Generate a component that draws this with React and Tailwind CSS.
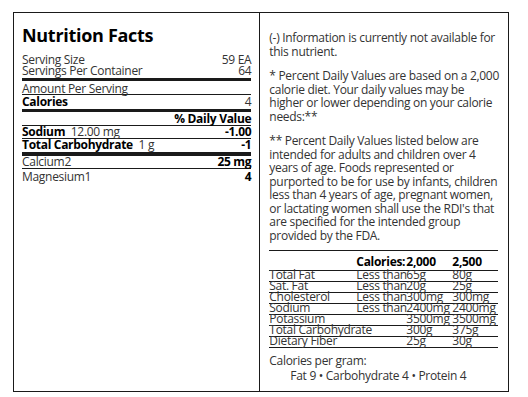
export default function App() {
  const rows = [
    ["Total Fat", "Less than", "65g", "80g"],
    ["Sat. Fat", "Less than", "20g", "25g"],
    ["Cholesterol", "Less than", "300mg", "300mg"],
    ["Sodium", "Less than", "2400mg", "2400mg"],
    ["Potassium", "", "3500mg", "3500mg"],
    ["Total Carbohydrate", "", "300g", "375g"],
    ["Dietary Fiber", "", "25g", "30g"],
  ];
  const p1 = ["(-) Information is currently not available for", "this nutrient."];
  const p2 = [
    "* Percent Daily Values are based on a 2,000",
    "calorie diet. Your daily values may be",
    "higher or lower depending on your calorie",
    "needs:**",
  ];
  const p3 = [
    "** Percent Daily Values listed below are",
    "intended for adults and children over 4",
    "years of age. Foods represented or",
    "purported to be for use by infants, children",
    "less than 4 years of age, pregnant women,",
    "or lactating women shall use the RDI's that",
    "are specified for the intended group",
    "provided by the FDA.",
  ];
  const Para = ({ lines, className }) => (
    <p className={className}>
      {lines.map((l) => (
        <span key={l} className="block whitespace-nowrap">{l}</span>
      ))}
    </p>
  );
  return (
    <div className="w-[528px] h-[397px] bg-white pt-[12px] pl-[13px] text-[#333] text-[12px]" style={{ fontFamily: '"Open Sans", "Noto Sans", sans-serif' }}>
      <div className="flex w-[496px] h-[380px] border border-[#1a1a1a]">
        <div className="w-[247px] border-r border-[#1a1a1a] px-[8px] pt-[11px]">
          <div className="text-[18px] font-bold text-black leading-[22px] tracking-[-0.3px]">Nutrition Facts</div>
          <div className="mt-[8px] leading-[11px] tracking-[-0.3px]">
            <div className="flex justify-between"><span>Serving Size</span><span>59 EA</span></div>
            <div className="flex justify-between border-b-[3px] border-[#1a1a1a] pb-[2px]"><span>Servings Per Container</span><span>64</span></div>
            <div className="border-b border-[#1a1a1a] pt-[2px]">Amount Per Serving</div>
            <div className="flex justify-between border-b-[3px] border-[#1a1a1a] pt-[1px] pb-[2px]"><span className="font-bold text-black">Calories</span><span>4</span></div>
            <div className="flex justify-end border-b border-[#1a1a1a] pt-[1px] pb-[1px]"><span className="font-bold text-black">% Daily Value</span></div>
            <div className="flex justify-between border-b border-[#1a1a1a] pb-[1px]"><span><span className="font-bold text-black">Sodium</span>&nbsp; 12.00 mg</span><span className="font-bold text-black">-1.00</span></div>
            <div className="flex justify-between border-b-[4px] border-[#1a1a1a] pb-[2px]"><span><span className="font-bold text-black">Total Carbohydrate</span>&nbsp; 1 g</span><span className="font-bold text-black">-1</span></div>
            <div className="flex justify-between border-b border-[#1a1a1a] pb-[1px]"><span>Calcium2</span><span className="font-bold text-black">25 mg</span></div>
            <div className="flex justify-between pt-[2px]"><span>Magnesium1</span><span className="font-bold text-black">4</span></div>
          </div>
        </div>
        <div className="flex-1 pl-[9px] pr-[9px] pt-[18px] leading-[13.5px] tracking-[-0.3px]">
          <Para lines={p1} />
          <Para lines={p2} className="mt-[11px]" />
          <Para lines={p3} className="mt-[11px]" />
          <div className="mt-[8px] border-t border-[#1a1a1a] mr-[1px]">
            <div className="grid grid-cols-[87px_50px_46px_1fr] border-b border-[#1a1a1a] pt-[4px] pb-[1px] leading-[14px] font-bold text-black whitespace-nowrap">
              <span></span><span>Calories:</span><span>2,000</span><span>2,500</span>
            </div>
            {rows.map((r) => (
              <div key={r[0]} className="grid grid-cols-[87px_50px_46px_1fr] border-b border-[#1a1a1a] leading-[8px] pb-[2px] whitespace-nowrap">
                <span>{r[0]}</span><span>{r[1]}</span><span>{r[2]}</span><span>{r[3]}</span>
              </div>
            ))}
          </div>
          <div className="mt-[5px] leading-[15px]">Calories per gram:</div>
          <div className="pl-[21px] leading-[15px]">Fat 9 • Carbohydrate 4 • Protein 4</div>
        </div>
      </div>
    </div>
  );
}
